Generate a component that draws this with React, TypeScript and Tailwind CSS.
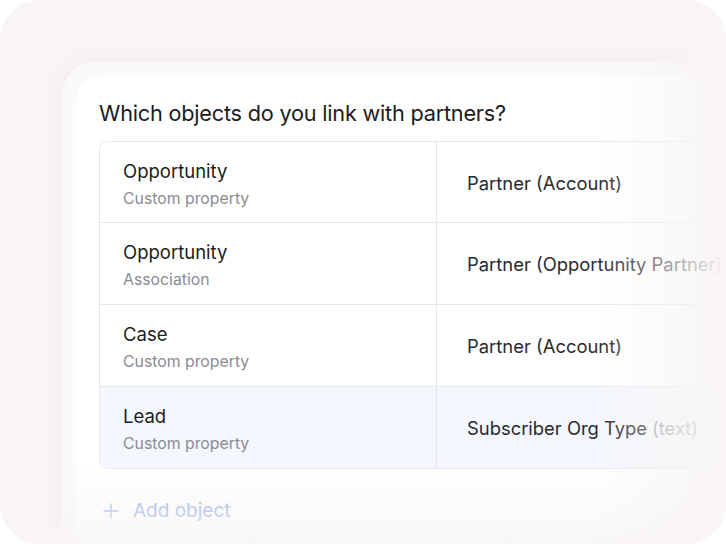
import { Plus } from "lucide-react";

type LinkRow = {
  object: string;
  kind: string;
  field: string;
  hint?: string;
  active?: boolean;
};

const rows: LinkRow[] = [
  { object: "Opportunity", kind: "Custom property", field: "Partner (Account)" },
  { object: "Opportunity", kind: "Association", field: "Partner (Opportunity Partner)" },
  { object: "Case", kind: "Custom property", field: "Partner (Account)" },
  { object: "Lead", kind: "Custom property", field: "Subscriber Org Type", hint: "(text)", active: true },
];

export default function App() {
  return (
    <div className="w-[726px] h-[544px] bg-white font-['Inter',sans-serif] antialiased">
      <div className="relative h-full rounded-[40px] bg-[#f8f5f4] overflow-hidden pl-[62px] pt-[62px]">
        {/* frosted frame */}
        <div className="h-full rounded-tl-[34px] bg-[#fbf9f9] pl-[14px] pt-[14px] shadow-[0_0_24px_rgba(120,90,80,0.06)]">
          <div className="h-full rounded-tl-[24px] bg-white pl-[23px] pt-[22px]">
            <h2 className="text-[21.7px] leading-[30px] text-[#1c1c21] tracking-[-0.01em]">
              Which objects do you link with partners?
            </h2>

            <div className="mt-[13px] w-[700px] rounded-l-[9px] border border-r-0 border-[#e7e8ef] overflow-hidden">
              {rows.map((row, i) => (
                <div
                  key={i}
                  className={`flex ${i > 0 ? "h-[82px] border-t border-[#e7e8ef]" : "h-[80px]"} ${row.active ? "bg-[#f4f7fd]" : "bg-white"}`}
                >
                  <div className="w-[337px] shrink-0 border-r border-[#e7e8ef] pl-[23px] pt-[16px]">
                    <div className="text-[18.5px] leading-[26px] text-[#1c1c21]">{row.object}</div>
                    <div className="mt-[4px] text-[15.8px] leading-[22px] text-[#8b8b93]">{row.kind}</div>
                  </div>
                  <div className="flex items-center pl-[30px] pt-[3px] text-[18.4px] text-[#2a2a30] whitespace-nowrap">
                    {row.field}
                    {row.hint && <span className="ml-[5px] text-[#9a9aa2]">{row.hint}</span>}
                  </div>
                </div>
              ))}
            </div>

            <button className="mt-[28px] flex items-center gap-[10px] text-[19px] text-[#8ea8ef]">
              <Plus className="w-6 h-6" strokeWidth={1.3} />
              Add object
            </button>
          </div>
        </div>

        {/* soft fades on the right and bottom edges */}
        <div className="pointer-events-none absolute top-0 right-0 bottom-0 w-[130px] bg-gradient-to-r from-[#f8f5f4]/0 via-[#f8f5f4]/50 to-[#f8f5f4]" />
        <div className="pointer-events-none absolute left-0 right-0 bottom-0 h-[80px] bg-gradient-to-b from-[#f8f5f4]/0 to-[#f8f5f4]/80" />
      </div>
    </div>
  );
}
